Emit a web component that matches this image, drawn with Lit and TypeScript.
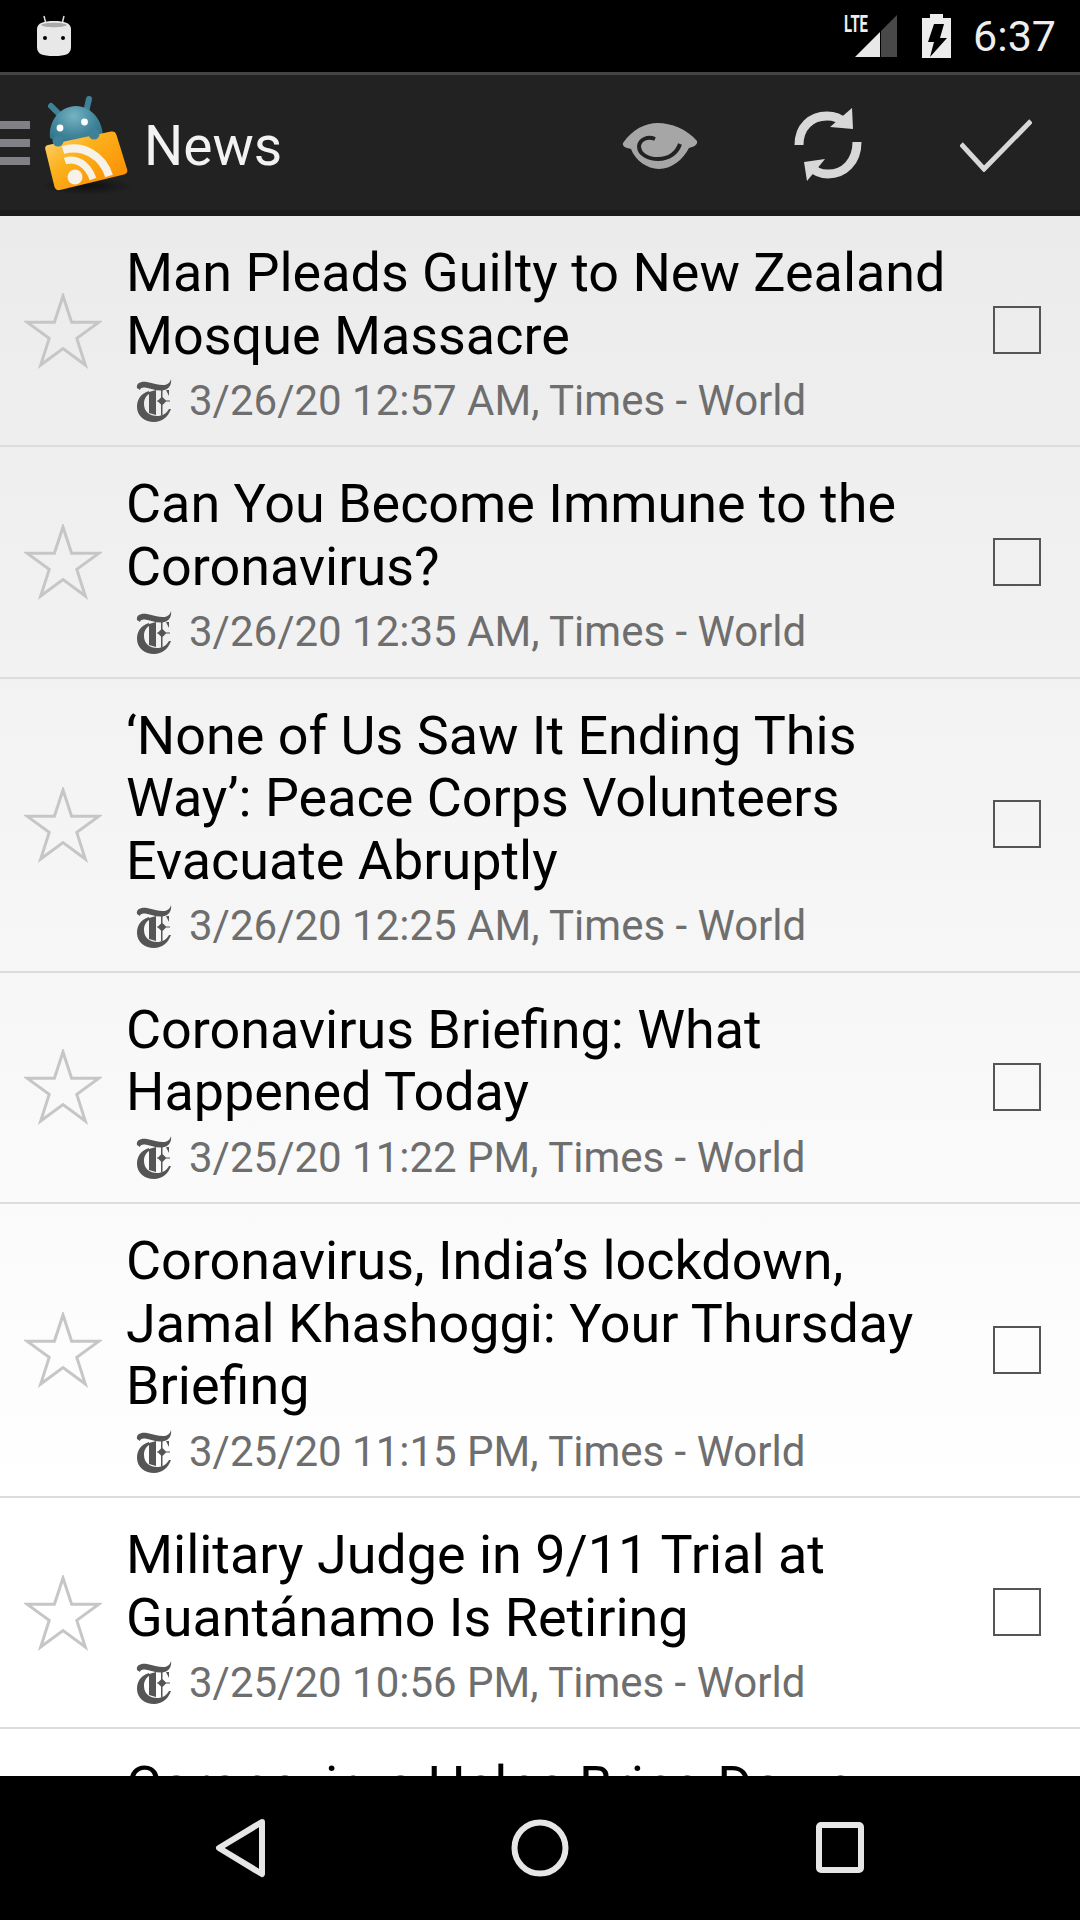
import { LitElement, html, css, svg } from "lit";
import { customElement } from "lit/decorators.js";

const items = [
  { t: "Man Pleads Guilty to New Zealand Mosque Massacre", d: "3/26/20 12:57 AM, Times - World" },
  { t: "Can You Become Immune to the Coronavirus?", d: "3/26/20 12:35 AM, Times - World" },
  { t: "‘None of Us Saw It Ending This Way’: Peace Corps Volunteers Evacuate Abruptly", d: "3/26/20 12:25 AM, Times - World" },
  { t: "Coronavirus Briefing: What Happened Today", d: "3/25/20 11:22 PM, Times - World" },
  { t: "Coronavirus, India’s lockdown, Jamal Khashoggi: Your Thursday Briefing", d: "3/25/20 11:15 PM, Times - World" },
  { t: "Military Judge in 9/11 Trial at Guantánamo Is Retiring", d: "3/25/20 10:56 PM, Times - World" },
  { t: "Coronavirus Helps Bring Down", d: "" },
];

const star = svg`<svg class="star" viewBox="0 0 78 76" width="78" height="76"><path d="M39 3 L47.6 29.2 L75 29.2 L52.8 45.4 L61.3 72 L39 55.6 L16.7 72 L25.2 45.4 L3 29.2 L30.4 29.2 Z" fill="none" stroke="#c6c6c6" stroke-width="3"/></svg>`;

const nyt = svg`<svg class="nyt" viewBox="11 6 36 44" width="36" height="44">
  <path fill="#555" d="M12 16 C11 11 16 9 22 10 C28 11 33 13 38 13 C42 13 45 11 46 7 C47 12 44 18 37 18.500 C31 19 25 16 20 15.500 C17 15.200 15 16 15 18 Z"/>
  <path fill="#555" d="M24 19 C15 22 12 28 12 35 C12 44 20 50 29 50 C37 50 43 45 46 37 L44 37 C41 42 37 44 32 44 C25 44 19 40 19 32 C19 27 21 24 24 22 Z"/>
  <path fill="#555" d="M24 20 L31 18 L31 43 L24 41 Z"/>
  <path fill="#555" d="M36 18 H37.500 V43 H36 Z M37 24.500 L41.500 29 L37 33.500 L32.500 29 Z M32 28.400 H45 V29.600 H32 Z M41 18 L44 18 L44 24 Z"/>
</svg>`;

const logo = svg`<svg class="logo" viewBox="0 0 105 110" width="105" height="110">
  <defs>
    <radialGradient id="h" cx="45%" cy="22%" r="75%"><stop offset="0" stop-color="#74b3c2"/><stop offset=".55" stop-color="#41859b"/><stop offset="1" stop-color="#2c6a80"/></radialGradient>
    <linearGradient id="b" x1="0" y1="0" x2="1" y2=".9"><stop offset="0" stop-color="#fdd67c"/><stop offset=".4" stop-color="#fcb11c"/><stop offset="1" stop-color="#fa8a00"/></linearGradient>
    <radialGradient id="s"><stop offset="0" stop-color="#000" stop-opacity=".55"/><stop offset="1" stop-color="#000" stop-opacity="0"/></radialGradient>
  </defs>
  <ellipse cx="52" cy="96" rx="46" ry="9" fill="url(#s)"/>
  <path d="M16 16 L25 25" stroke="#3f8196" stroke-width="6" stroke-linecap="round"/>
  <path d="M54 9 L51 22" stroke="#3f8196" stroke-width="6" stroke-linecap="round"/>
  <path d="M15 48 C13 30 26 16 41 16 C56 16 68 30 68 48 L40 62 Z" fill="url(#h)"/>
  <circle cx="25" cy="38" r="3.400" fill="#fff"/><circle cx="49.500" cy="32" r="3.400" fill="#fff"/>
  <path d="M10.500 60 C9.500 57 11 55.500 13 55 L76 41.500 C79 41 80.500 42 81.500 45 L92 79 C93 82 91.500 84 89 84.500 L25 100 C22 100.500 20.500 99.500 19.500 97 Z" fill="url(#b)"/>
  <circle cx="40" cy="87" r="7.500" fill="#f6f2ea"/>
  <path d="M30 71 C42 67 53 75 58 89" fill="none" stroke="#f6f2ea" stroke-width="7"/>
  <path d="M28 60 C48 54 68 66 74 86" fill="none" stroke="#f6f2ea" stroke-width="8"/>
  <circle cx="23" cy="51" r="5.500" fill="#3f8196"/><circle cx="59" cy="44" r="5.500" fill="#3f8196"/>
</svg>`;

@customElement("app-root")
export class AppRoot extends LitElement {
  static styles = css`
    :host { display: flex; flex-direction: column; width: 1080px; height: 1920px; font-family: Roboto, sans-serif; overflow: hidden; background: #000; }
    svg { display: block; flex: none; }
    .status { height: 72px; background: #000; display: flex; align-items: center; padding: 0 24px 0 36px; box-sizing: border-box; flex: none; }
    .droid { margin-right: auto; }
    .lte { position: relative; width: 54px; height: 44px; margin-right: 24px; }
    .lte span { position: absolute; left: 0; top: -2px; font-size: 24px; font-weight: 700; line-height: 24px; color: #eee; transform: scaleX(.62); transform-origin: left top; }
    .clock { font-size: 43px; color: #eee; margin-left: 21px; }
    .bar { height: 144px; flex: none; box-sizing: border-box; background: #222; border-top: 3px solid #444; border-bottom: 6px solid #1a1a1a; padding-top: 4px; display: flex; align-items: center; }
    .burger { width: 30px; display: flex; flex-direction: column; gap: 10px; margin-top: -3px; flex: none; }
    .burger i { display: block; height: 8px; background: #808086; }
    .logo { margin: 0 0 0 5px; }
    .title { font-size: 55px; color: #f2f2f2; margin: 2px auto 0 4px; }
    .act { width: 168px; display: flex; justify-content: center; flex: none; }
    .list { flex: 1; min-height: 0; overflow: hidden; background: linear-gradient(#ebebeb, #fff 1290px, #fff); }
    .row { display: grid; grid-template-columns: 126px 1fr 126px; align-items: center; border-bottom: 2px solid #dcdcdc; box-sizing: border-box; min-height: 231px; }
    .star { justify-self: start; margin-left: 24px; }
    .text { align-self: start; padding: 26px 0 15px; min-width: 0; }
    .h { font-size: 53.9px; line-height: 62.67px; color: #000; }
    .meta { display: flex; align-items: center; height: 60px; margin-top: 3px; }
    .nyt { margin-left: 10px; }
    .d { font-size: 42px; color: #6e6e6e; margin-left: 17px; white-space: nowrap; }
    .box { width: 48px; height: 48px; box-sizing: border-box; border: 2px solid #555; justify-self: start; margin: -1px 0 0 39px; }
    .nav { height: 144px; flex: none; background: #000; position: relative; }
    .nav svg { position: absolute; }
    .back { left: 214px; top: 42px; }
    .home { left: 510px; top: 42px; }
    .recent { left: 814px; top: 44px; }
  `;

  render() {
    return html`
      <div class="status">
        <svg class="droid" viewBox="0 0 36 42" width="36" height="42">
          <path d="M8 1 L10 9 M28 1 L26 9" stroke="#ddd" stroke-width="1.500"/>
          <path d="M1 14 C1 8 8 6 18 6 C28 6 35 8 35 14 L35 32 C35 39 30 41 18 41 C6 41 1 39 1 32 Z" fill="#e8e8e8"/>
          <path d="M5 10 C8 7 28 7 31 10 C28 13 8 13 5 10 Z" fill="#a9a9a9"/>
          <circle cx="9" cy="23" r="2" fill="#000"/><circle cx="27" cy="23" r="2" fill="#000"/>
        </svg>
        <div class="lte"><span>LTE</span>
          <svg viewBox="0 0 54 44" width="54" height="44">
            <path d="M11 43 L36 18 L36 43 Z" fill="#e8e8e8"/>
            <path d="M37 17 L53 1 L53 43 L37 43 Z" fill="#484848"/>
          </svg>
        </div>
        <svg viewBox="0 0 30 45" width="30" height="45">
          <path d="M8 0 H21 V4 H29 V44 H0 V4 H8 Z" fill="#ececec"/>
          <path d="M12 10 L22 10 L18 24 L25 24 L8 43 L12 28 L6 28 Z" fill="#000"/>
        </svg>
        <div class="clock">6:37</div>
      </div>
      <div class="bar">
        <div class="burger"><i></i><i></i><i></i></div>
        ${logo}
        <div class="title">News</div>
        <div class="act">
          <svg viewBox="0 0 90 60" width="90" height="60">
            <path d="M8 28 C18 14 30 8 43 8 C56 8 72 14 82 26 C83 30 78 32 74 33 C68 45 56 54 44 54 C32 54 20 45 16 34 C12 33 7 32 8 28 Z" fill="#a6a6a6"/>
            <path d="M40 24 C33 21 25 24 24 31 C24 40 34 44 43 44 C54 44 62 38 65 29" fill="none" stroke="#222" stroke-width="4"/>
          </svg>
        </div>
        <div class="act">
          <svg viewBox="0 0 68 74" width="68" height="74">
            <path d="M5 37 C5 19 17 8 33 8 C42 8 47 11 51 15" fill="none" stroke="#d8d8d8" stroke-width="9"/>
            <path d="M58 0 L59 21 L36 19 Z" fill="#d8d8d8"/>
            <path d="M63 34 C63 54 50 66 34 66 C25 66 21 63 17 59" fill="none" stroke="#d8d8d8" stroke-width="9"/>
            <path d="M13 73 L10 54 L31 51 Z" fill="#d8d8d8"/>
          </svg>
        </div>
        <div class="act">
          <svg viewBox="0 0 72 54" width="72" height="54">
            <path d="M1 26 L24 51 L71 3" fill="none" stroke="#d8d8d8" stroke-width="5"/>
          </svg>
        </div>
      </div>
      <div class="list">
        ${items.map(i => html`
          <div class="row">
            ${star}
            <div class="text">
              <div class="h">${i.t}</div>
              ${i.d ? html`<div class="meta">${nyt}<span class="d">${i.d}</span></div>` : ""}
            </div>
            <div class="box"></div>
          </div>`)}
      </div>
      <div class="nav">
        <svg class="back" viewBox="0 0 52 60" width="52" height="60">
          <path d="M48 4 L5 30 L48 56 Z" fill="none" stroke="#e6e6e6" stroke-width="6" stroke-linejoin="round"/>
        </svg>
        <svg class="home" viewBox="0 0 60 60" width="60" height="60">
          <circle cx="30" cy="30" r="25.500" fill="none" stroke="#e6e6e6" stroke-width="6"/>
        </svg>
        <svg class="recent" viewBox="0 0 52 56" width="52" height="56">
          <rect x="5" y="5" width="42" height="45" rx="2" fill="none" stroke="#e6e6e6" stroke-width="6"/>
        </svg>
      </div>
    `;
  }
}
